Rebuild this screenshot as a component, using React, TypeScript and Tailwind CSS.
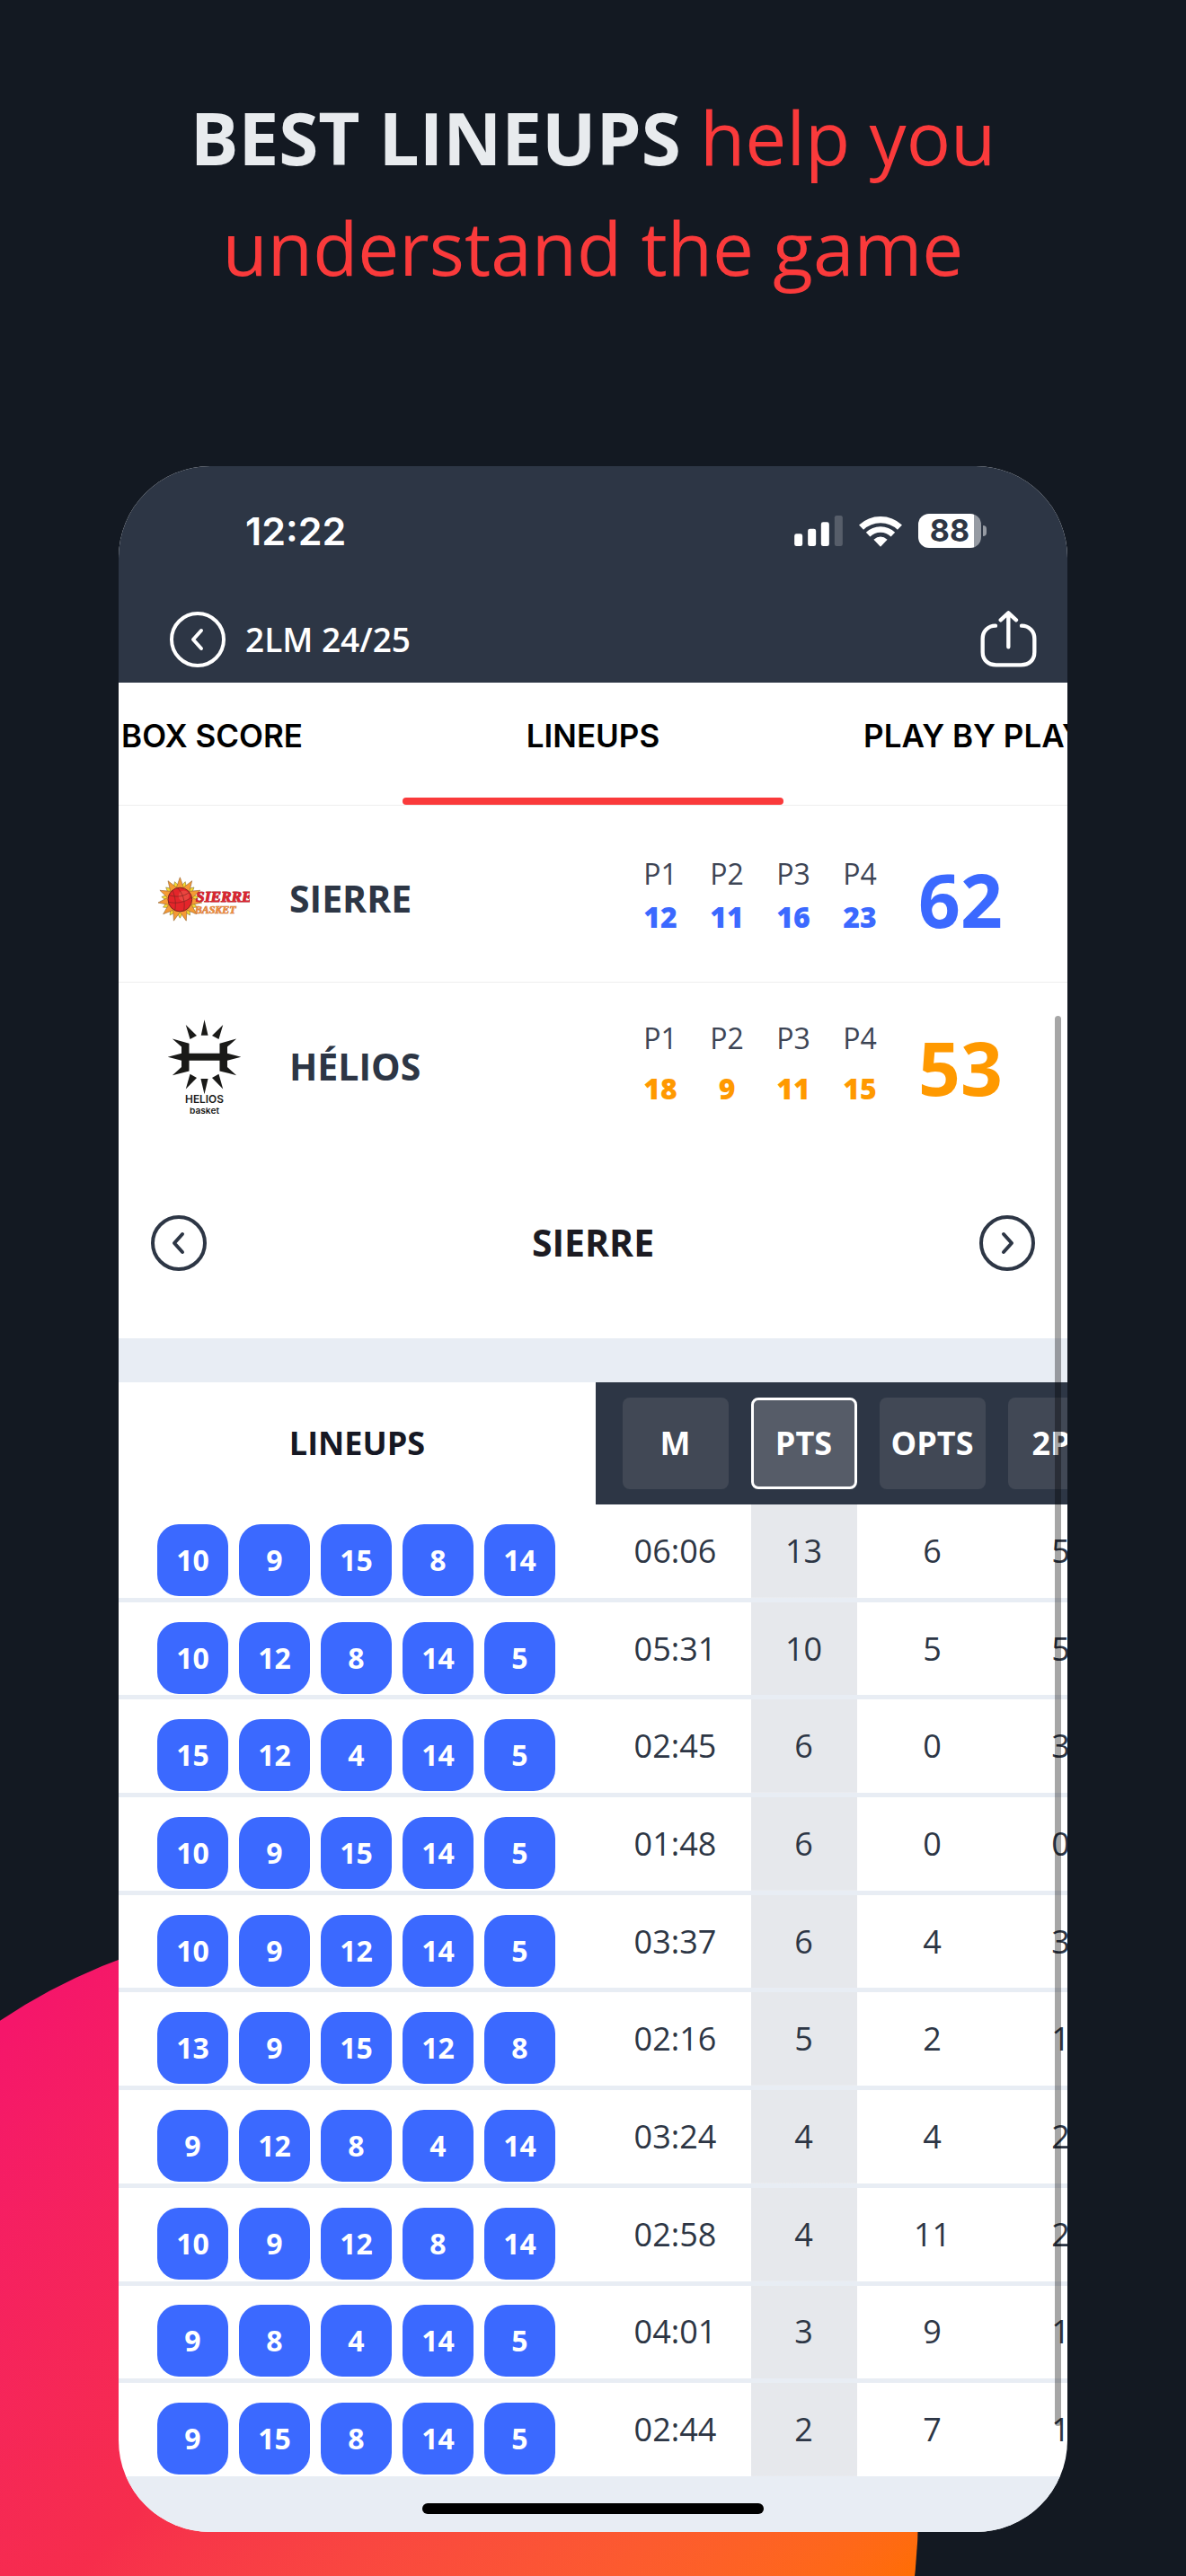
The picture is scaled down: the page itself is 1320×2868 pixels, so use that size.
import type { ReactNode } from "react";

const lineups = [
  { players: [10, 9, 15, 8, 14], stats: ["06:06", "13", "6", "5"] },
  { players: [10, 12, 8, 14, 5], stats: ["05:31", "10", "5", "5"] },
  { players: [15, 12, 4, 14, 5], stats: ["02:45", "6", "0", "3"] },
  { players: [10, 9, 15, 14, 5], stats: ["01:48", "6", "0", "0"] },
  { players: [10, 9, 12, 14, 5], stats: ["03:37", "6", "4", "3"] },
  { players: [13, 9, 15, 12, 8], stats: ["02:16", "5", "2", "1"] },
  { players: [9, 12, 8, 4, 14], stats: ["03:24", "4", "4", "2"] },
  { players: [10, 9, 12, 8, 14], stats: ["02:58", "4", "11", "2"] },
  { players: [9, 8, 4, 14, 5], stats: ["04:01", "3", "9", "1"] },
  { players: [9, 15, 8, 14, 5], stats: ["02:44", "2", "7", "1"] },
];

const columns = ["M", "PTS", "OPTS", "2PT"];
const sortedColumn = 1;

function CircleChevron({ direction }: { direction: "left" | "right" }) {
  return (
    <svg viewBox="0 0 62 62" className="size-[62px]" fill="none" stroke="currentColor" strokeWidth="4" strokeLinecap="round" strokeLinejoin="round" aria-hidden="true">
      <circle cx="31" cy="31" r="29" />
      <path d={direction === "left" ? "M35 21 26 31 35 41" : "M27 21 36 31 27 41"} />
    </svg>
  );
}

function ShareIcon() {
  return (
    <svg viewBox="692 392 189 189" className="size-[63px]" fill="none" stroke="currentColor" strokeWidth="13" strokeLinecap="round" strokeLinejoin="round" aria-hidden="true">
      <path d="M786 400V513M760 423L786 399L812 423" />
      <path d="M743 442C718 442 700 460 700 485V530C700 556 718 573 745 573H828C856 573 873 556 873 530V485C873 460 855 442 830 442" />
    </svg>
  );
}

function SignalIcon() {
  return (
    <svg viewBox="71 69 161 102" className="h-[34px] w-[54px]" fill="currentColor" aria-hidden="true">
      <rect x="71" y="130" width="27" height="41" rx="7" />
      <rect x="116" y="113" width="27" height="58" rx="7" />
      <rect x="160" y="91" width="27" height="80" rx="7" />
      <rect x="205" y="69" width="27" height="102" rx="7" opacity=".2" />
    </svg>
  );
}

function WifiIcon() {
  return (
    <svg viewBox="287 66 144 106" className="h-[35px] w-12" fill="none" stroke="currentColor" aria-hidden="true">
      <path d="M294 106A94 94 0 0 1 424 106" strokeWidth="22" />
      <path d="M317 130A60 60 0 0 1 401 130" strokeWidth="20" />
      <path d="M359 171L336 147Q359 128 382 147Z" fill="currentColor" stroke="none" />
    </svg>
  );
}

function Battery() {
  return (
    <div className="flex items-center gap-[2px]">
      <div className="flex h-[38px] w-[70px] items-center justify-center rounded-xl bg-linear-to-r from-white from-88% to-[#969ba3] to-88% font-['Inter',sans-serif] text-[34px] leading-none font-bold text-[#2d3645]">
        88
      </div>
      <div className="h-3 w-1 rounded-r-full bg-[#969ba3]" />
    </div>
  );
}

function star(count: number, outer: number, inner: number, turn: number) {
  return Array.from({ length: count * 2 }, (_, i) => {
    const angle = ((i + turn) * Math.PI) / count;
    const radius = i % 2 === 0 ? outer : inner;
    return `${(121 + radius * Math.sin(angle)).toFixed(1)},${(148 - radius * Math.cos(angle)).toFixed(1)}`;
  }).join(" ");
}

function SierreLogo() {
  return (
    <svg viewBox="48 72 306 152" className="h-[51px] w-[102px]" role="img" aria-label="Sierre Basket">
      <polygon points={star(11, 62, 42, 1)} fill="#f7dc2e" stroke="#8d7a3a" strokeWidth="2" />
      <polygon points={star(11, 74, 42, 0)} fill="#f59a35" stroke="#9a6a35" strokeWidth="2" />
      <circle cx="121" cy="148" r="40" fill="#e4252a" stroke="#7c2420" strokeWidth="3" />
      <circle cx="134" cy="136" r="18" fill="#ee5a4c" opacity=".6" />
      <path d="M84 133C108 142 134 138 152 124M82 156C110 164 140 156 160 140M112 109C128 124 140 150 134 185M96 117C106 140 108 164 104 184" fill="none" stroke="#7c2420" strokeWidth="2" />
      <text x="174" y="156" fontFamily="Liberation Serif, serif" fontWeight="700" fontStyle="italic" fontSize="52" fill="#dc2430" stroke="#b3262c" strokeWidth="3" paintOrder="stroke">SIERRE</text>
      <text x="170" y="196" fontFamily="Liberation Serif, serif" fontWeight="700" fontStyle="italic" fontSize="36" fill="#ee8b3c" stroke="#c4763c" strokeWidth="2" paintOrder="stroke">BASKET</text>
    </svg>
  );
}

function HeliosLogo() {
  return (
    <svg viewBox="50 45 244 312" className="h-[106px] w-[83px]" fill="#1a1a18" role="img" aria-label="Helios basket">
      <clipPath id="basket-line">
        <rect x="50" y="334" width="244" height="20" />
      </clipPath>
      <path d="M172 46L184 97H161ZM111 63L147 98L125 110ZM233 63L219 110L197 98ZM125 224L147 236L111 273ZM219 224L197 236L233 273ZM160 239H184L172 290Z" />
      <path d="M67 108L122 124V156H222V124L277 108L247 135V156L292 168L247 180V201L277 228L222 214V180H122V214L67 228L97 201V180L52 168L97 156V135Z" />
      <text x="172" y="320" textAnchor="middle" fontFamily="Inter, sans-serif" fontWeight="600" fontSize="35">HELIOS</text>
      <text x="172" y="355" textAnchor="middle" fontFamily="Inter, sans-serif" fontWeight="600" fontSize="30" clipPath="url(#basket-line)">basket</text>
    </svg>
  );
}

type TeamProps = { logo: ReactNode; name: string; periods: number[]; total: number; rowClass: string; scoreClass: string; gapClass: string };

function TeamRow({ logo, name, periods, total, rowClass, scoreClass, gapClass }: TeamProps) {
  return (
    <section className={`flex items-center px-11 ${rowClass}`}>
      <div className="flex w-[102px] shrink-0 justify-center">{logo}</div>
      <h2 className="ml-11 flex-1 text-[41px] font-bold text-[#2d3645]">{name}</h2>
      <dl className="grid grid-cols-4 pb-2 text-center text-[32px] leading-[48px]">
        {periods.map((points, i) => (
          <div key={i} className={`flex w-[74px] flex-col ${gapClass}`}>
            <dt className="text-[#3d4555]">P{i + 1}</dt>
            <dd className={`font-extrabold ${scoreClass}`}>{points}</dd>
          </div>
        ))}
      </dl>
      <p className={`w-[150px] text-center text-[82px] leading-none font-bold ${scoreClass}`}>{total}</p>
    </section>
  );
}

export default function App() {
  return (
    <main className="relative isolate overflow-hidden bg-[#131922] pb-[49px] font-['Open_Sans',sans-serif]">
      <div className="absolute top-[2139px] left-[-292px] -z-10 size-[1314px] rounded-full bg-linear-135 from-[#f5166a] from-16% via-[#f62d4c] via-42% to-[#ff6e00] to-78%" />

      <h1 className="px-10 pt-[91px] text-center text-[82px] leading-[123px] text-[#fa3a3b]">
        <strong className="text-[80px] font-bold text-[#e8ebee]">BEST LINEUPS</strong> help you
        <br />
        understand the game
      </h1>

      <div className="relative mx-[10%] mt-[182px] overflow-hidden rounded-[102px] bg-white">
        <header className="bg-[#2d3645] text-white">
          <div className="flex h-36 items-center justify-between pr-[90px] pl-[141px]">
            <span className="font-['Inter',sans-serif] text-[43px] font-semibold">12:22</span>
            <div className="flex items-center gap-[18px]">
              <SignalIcon />
              <WifiIcon />
              <Battery />
            </div>
          </div>
          <div className="flex h-[97px] items-center justify-between pr-[34px] pl-[57px]">
            <button type="button" className="flex items-center gap-[22px] text-[37px] font-semibold">
              <CircleChevron direction="left" />
              2LM 24/25
            </button>
            <button type="button" aria-label="Share">
              <ShareIcon />
            </button>
          </div>
        </header>

        <nav className="flex h-[137px] justify-center border-b border-[#eeeeee] font-['Inter',sans-serif] text-[35px] font-semibold text-black">
          {["BOX SCORE", "LINEUPS", "PLAY BY PLAY"].map((tab) => (
            <button key={tab} type="button" className="flex w-[424px] shrink-0 flex-col justify-between">
              <span className="w-full text-center leading-[119px]">{tab}</span>
              {tab === "LINEUPS" && <span className="h-2 w-full rounded-full bg-[#fa3a3b]" />}
            </button>
          ))}
        </nav>

        <TeamRow
          logo={<SierreLogo />}
          name="SIERRE"
          periods={[12, 11, 16, 23]}
          total={62}
          rowClass="h-[197px] border-b border-[#eeeeee] pt-3"
          scoreClass="text-[#3b69ff]"
          gapClass="gap-0"
        />
        <TeamRow
          logo={<HeliosLogo />}
          name="HÉLIOS"
          periods={[18, 9, 11, 15]}
          total={53}
          rowClass="h-[188px]"
          scoreClass="text-[#ff9900]"
          gapClass="gap-2"
        />

        <div className="flex h-[208px] items-center justify-between px-9 pb-1 text-[#2d3645]">
          <button type="button" aria-label="Previous team">
            <CircleChevron direction="left" />
          </button>
          <h2 className="text-[41px] font-bold text-[#1c1b22]">SIERRE</h2>
          <button type="button" aria-label="Next team">
            <CircleChevron direction="right" />
          </button>
        </div>

        <div className="h-[49px] bg-[#e8edf4]" />

        <div className="overflow-hidden">
          <table className="h-[1223px] w-[1120px] table-fixed border-separate border-spacing-0 text-center text-[36px]">
            <colgroup>
              <col className="w-[531px]" />
              <col className="w-[160px]" />
              <col className="w-[143px]" />
              <col className="w-[143px]" />
              <col className="w-[143px]" />
            </colgroup>
            <thead>
              <tr className="h-[136px]">
                <th scope="col" className="p-0 font-bold text-[#161824]">LINEUPS</th>
                {columns.map((label, i) => (
                  <th key={label} scope="col" className={`bg-[#2d3645] p-0 ${i === 0 ? "pl-[17px]" : ""}`}>
                    <button
                      type="button"
                      className={`mx-auto block h-[102px] w-[118px] rounded-lg font-bold text-white ${
                        i === sortedColumn ? "border-3 border-white bg-[#565c68]" : "bg-[#414855]"
                      }`}
                    >
                      {label}
                    </button>
                  </th>
                ))}
              </tr>
            </thead>
            <tbody className="text-[#2d3645]">
              {lineups.map(({ players, stats }) => (
                <tr key={players.join("-")}>
                  <td className="border-b-5 border-[#e8edf4] px-0 pt-5 pb-0">
                    <div className="flex gap-3 pl-[43px]">
                      {players.map((number, i) => (
                        <span key={i} className="flex h-20 w-[79px] items-center justify-center rounded-3xl bg-[#3b69ff] text-[32px] font-bold text-white">
                          {number}
                        </span>
                      ))}
                    </div>
                  </td>
                  {stats.map((value, i) => (
                    <td
                      key={i}
                      className={`border-b-5 border-[#e8edf4] p-0 font-medium ${i === 0 ? "pl-[17px]" : ""} ${
                        i === sortedColumn ? "bg-[linear-gradient(#e6e8ec,#e6e8ec)] bg-size-[118px_100%] bg-center bg-no-repeat" : ""
                      }`}
                    >
                      {value}
                    </td>
                  ))}
                </tr>
              ))}
            </tbody>
          </table>
        </div>

        <footer className="flex h-[57px] items-center justify-center bg-[#e8edf4] pt-1">
          <div className="h-3 w-[36%] rounded-full bg-black" />
        </footer>

        <div className="absolute top-[612px] right-[7px] h-[1570px] w-[7px] rounded-full bg-black/35" />
      </div>
    </main>
  );
}
